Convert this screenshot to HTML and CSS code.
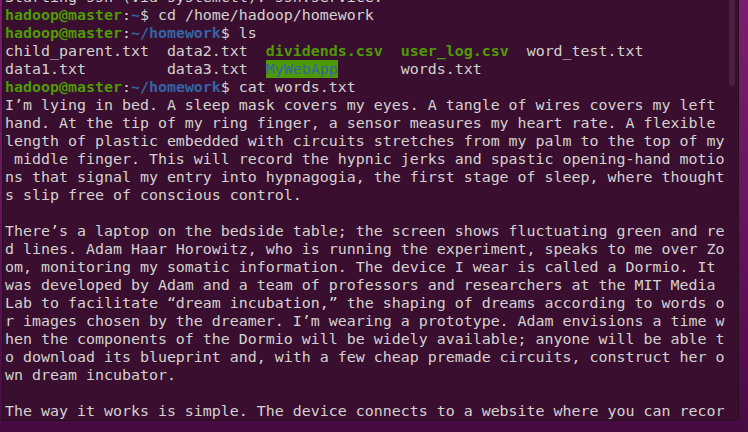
FILE: index.html
```html
<!DOCTYPE html>
<html>
<head>
<meta charset="utf-8">
<link rel="stylesheet" href="styles.css">
</head>
<body>
<div class="desktop">
  <div class="terminal">
    <div class="scrollbar"></div>
<pre class="screen">Starting ssh (via systemctl): ssh.service.
<span class="pu">hadoop@master</span>:<span class="pa">~</span>$ cd /home/hadoop/homework
<span class="pu">hadoop@master</span>:<span class="pa">~/homework</span>$ ls
child_parent.txt  data2.txt  <span class="ex">dividends.csv</span>  <span class="ex">user_log.csv</span>  word_test.txt
data1.txt         data3.txt  <span class="ow">MyWebApp</span>       words.txt
<span class="pu">hadoop@master</span>:<span class="pa">~/homework</span>$ cat words.txt
I’m lying in bed. A sleep mask covers my eyes. A tangle of wires covers my left
hand. At the tip of my ring finger, a sensor measures my heart rate. A flexible
length of plastic embedded with circuits stretches from my palm to the top of my
 middle finger. This will record the hypnic jerks and spastic opening-hand motio
ns that signal my entry into hypnagogia, the first stage of sleep, where thought
s slip free of conscious control.

There’s a laptop on the bedside table; the screen shows fluctuating green and re
d lines. Adam Haar Horowitz, who is running the experiment, speaks to me over Zo
om, monitoring my somatic information. The device I wear is called a Dormio. It
was developed by Adam and a team of professors and researchers at the MIT Media
Lab to facilitate “dream incubation,” the shaping of dreams according to words o
r images chosen by the dreamer. I’m wearing a prototype. Adam envisions a time w
hen the components of the Dormio will be widely available; anyone will be able t
o download its blueprint and, with a few cheap premade circuits, construct her o
wn dream incubator.

The way it works is simple. The device connects to a website where you can recor</pre>
  </div>
</div>
</body>
</html>
```

FILE: styles.css
```css
html, body {
  margin: 0;
  padding: 0;
}
body {
  width: 748px;
  height: 432px;
  overflow: hidden;
  background: linear-gradient(to bottom, #7c1d6e 0%, #6a1660 45%, #520c4c 85%, #480a43 100%);
}
.desktop {
  padding-left: 2px;
  width: 746px;
  height: 432px;
  box-sizing: border-box;
}
.terminal {
  position: relative;
  width: 737px;
  height: 421px;
  box-sizing: border-box;
  background: #3a0e2f;
  border: 1px solid #26101f;
  border-top: 0;
  overflow: hidden;
}
.scrollbar {
  position: absolute;
  top: 0;
  right: 3px;
  width: 6px;
  height: 86px;
  border-radius: 0 0 3px 3px;
  background: #4a2141;
}
.screen {
  margin: -12px 0 0 0;
  padding: 0 0 0 2px;
  font-family: "DejaVu Sans Mono", "Liberation Mono", monospace;
  font-size: 14.95px;
  line-height: 18px;
  color: #d3d2d0;
  white-space: pre;
}
.pu {
  color: #4e9a06;
  font-weight: bold;
}
.pa {
  color: #3465a4;
  font-weight: bold;
}
.ex {
  color: #4e9a06;
  font-weight: bold;
}
.ow {
  color: #3465a4;
  background: #4e9a06;
}
```
